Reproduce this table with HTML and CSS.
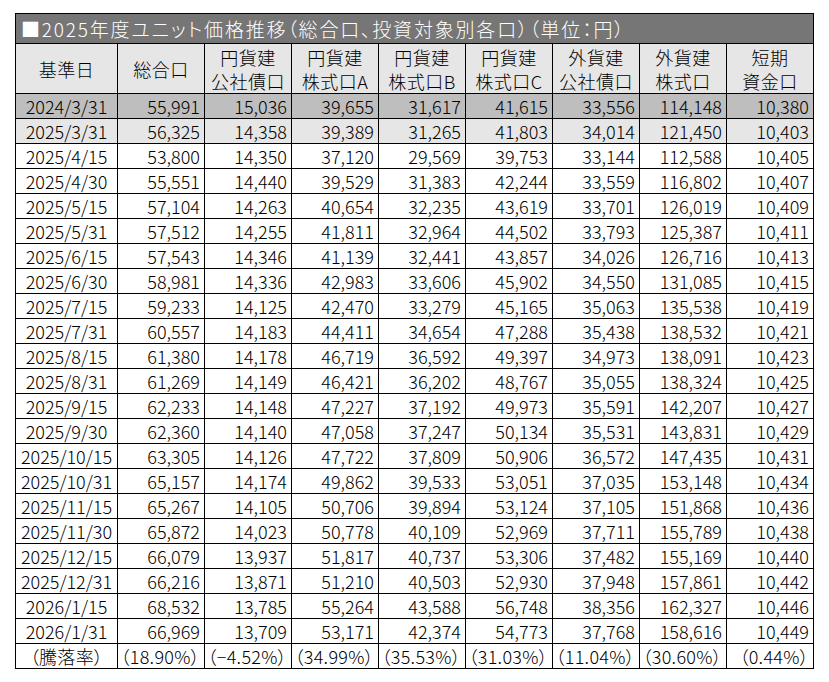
FILE: index.html
```html
<!DOCTYPE html>
<html lang="ja">
<head>
<meta charset="utf-8">
<title>2025年度ユニット価格推移</title>
<link rel="stylesheet" href="styles.css">
</head>
<body>
<div class="sheet">
  <div class="title">■2025年度ユニット価格推移（総合口、投資対象別各口）（単位：円）</div>
  <table class="grid">
    <colgroup>
      <col class="c-date">
      <col class="c-num"><col class="c-num"><col class="c-num"><col class="c-num">
      <col class="c-num"><col class="c-num"><col class="c-num"><col class="c-num">
    </colgroup>
    <thead>
      <tr class="head">
        <th>基準日</th>
        <th>総合口</th>
        <th>円貨建<br>公社債口</th>
        <th>円貨建<br>株式口A</th>
        <th>円貨建<br>株式口B</th>
        <th>円貨建<br>株式口C</th>
        <th>外貨建<br>公社債口</th>
        <th>外貨建<br>株式口</th>
        <th>短期<br>資金口</th>
      </tr>
    </thead>
    <tbody>
      <tr class="base-dark"><td>2024/3/31</td><td>55,991</td><td>15,036</td><td>39,655</td><td>31,617</td><td>41,615</td><td>33,556</td><td>114,148</td><td>10,380</td></tr>
      <tr class="base-light"><td>2025/3/31</td><td>56,325</td><td>14,358</td><td>39,389</td><td>31,265</td><td>41,803</td><td>34,014</td><td>121,450</td><td>10,403</td></tr>
      <tr><td>2025/4/15</td><td>53,800</td><td>14,350</td><td>37,120</td><td>29,569</td><td>39,753</td><td>33,144</td><td>112,588</td><td>10,405</td></tr>
      <tr><td>2025/4/30</td><td>55,551</td><td>14,440</td><td>39,529</td><td>31,383</td><td>42,244</td><td>33,559</td><td>116,802</td><td>10,407</td></tr>
      <tr><td>2025/5/15</td><td>57,104</td><td>14,263</td><td>40,654</td><td>32,235</td><td>43,619</td><td>33,701</td><td>126,019</td><td>10,409</td></tr>
      <tr><td>2025/5/31</td><td>57,512</td><td>14,255</td><td>41,811</td><td>32,964</td><td>44,502</td><td>33,793</td><td>125,387</td><td>10,411</td></tr>
      <tr><td>2025/6/15</td><td>57,543</td><td>14,346</td><td>41,139</td><td>32,441</td><td>43,857</td><td>34,026</td><td>126,716</td><td>10,413</td></tr>
      <tr><td>2025/6/30</td><td>58,981</td><td>14,336</td><td>42,983</td><td>33,606</td><td>45,902</td><td>34,550</td><td>131,085</td><td>10,415</td></tr>
      <tr><td>2025/7/15</td><td>59,233</td><td>14,125</td><td>42,470</td><td>33,279</td><td>45,165</td><td>35,063</td><td>135,538</td><td>10,419</td></tr>
      <tr><td>2025/7/31</td><td>60,557</td><td>14,183</td><td>44,411</td><td>34,654</td><td>47,288</td><td>35,438</td><td>138,532</td><td>10,421</td></tr>
      <tr><td>2025/8/15</td><td>61,380</td><td>14,178</td><td>46,719</td><td>36,592</td><td>49,397</td><td>34,973</td><td>138,091</td><td>10,423</td></tr>
      <tr><td>2025/8/31</td><td>61,269</td><td>14,149</td><td>46,421</td><td>36,202</td><td>48,767</td><td>35,055</td><td>138,324</td><td>10,425</td></tr>
      <tr><td>2025/9/15</td><td>62,233</td><td>14,148</td><td>47,227</td><td>37,192</td><td>49,973</td><td>35,591</td><td>142,207</td><td>10,427</td></tr>
      <tr><td>2025/9/30</td><td>62,360</td><td>14,140</td><td>47,058</td><td>37,247</td><td>50,134</td><td>35,531</td><td>143,831</td><td>10,429</td></tr>
      <tr><td>2025/10/15</td><td>63,305</td><td>14,126</td><td>47,722</td><td>37,809</td><td>50,906</td><td>36,572</td><td>147,435</td><td>10,431</td></tr>
      <tr><td>2025/10/31</td><td>65,157</td><td>14,174</td><td>49,862</td><td>39,533</td><td>53,051</td><td>37,035</td><td>153,148</td><td>10,434</td></tr>
      <tr><td>2025/11/15</td><td>65,267</td><td>14,105</td><td>50,706</td><td>39,894</td><td>53,124</td><td>37,105</td><td>151,868</td><td>10,436</td></tr>
      <tr><td>2025/11/30</td><td>65,872</td><td>14,023</td><td>50,778</td><td>40,109</td><td>52,969</td><td>37,711</td><td>155,789</td><td>10,438</td></tr>
      <tr><td>2025/12/15</td><td>66,079</td><td>13,937</td><td>51,817</td><td>40,737</td><td>53,306</td><td>37,482</td><td>155,169</td><td>10,440</td></tr>
      <tr><td>2025/12/31</td><td>66,216</td><td>13,871</td><td>51,210</td><td>40,503</td><td>52,930</td><td>37,948</td><td>157,861</td><td>10,442</td></tr>
      <tr><td>2026/1/15</td><td>68,532</td><td>13,785</td><td>55,264</td><td>43,588</td><td>56,748</td><td>38,356</td><td>162,327</td><td>10,446</td></tr>
      <tr><td>2026/1/31</td><td>66,969</td><td>13,709</td><td>53,171</td><td>42,374</td><td>54,773</td><td>37,768</td><td>158,616</td><td>10,449</td></tr>
      <tr class="rate"><td>（騰落率）</td><td>（18.90%）</td><td>（−4.52%）</td><td>（34.99%）</td><td>（35.53%）</td><td>（31.03%）</td><td>（11.04%）</td><td>（30.60%）</td><td>（0.44%）</td></tr>
    </tbody>
  </table>
</div>
</body>
</html>
```
FILE: styles.css
```css
html, body {
  margin: 0;
  padding: 0;
  background: #ffffff;
}

body {
  font-family: "Noto Sans CJK JP", "Liberation Sans", sans-serif;
  color: #000000;
}

.sheet {
  margin: 13px 0 0 15px;
  width: 799px;
}

.title {
  box-sizing: border-box;
  height: 30px;
  border: 1px solid #000;
  border-bottom: none;
  background: #767676;
  color: #ffffff;
  font-size: 19px;
  font-weight: 300;
  line-height: 29px;
  padding-left: 5px;
  white-space: nowrap;
  letter-spacing: 1.8px;
  font-feature-settings: "palt";
}

.grid {
  width: 799px;
  border-collapse: collapse;
  table-layout: fixed;
  font-size: 18px;
  font-weight: 300;
}

.c-date { width: 102px; }
.c-num { width: 87px; }

.grid th,
.grid td {
  border: 1px solid #000;
  padding: 0 4px 0 0;
  height: 24px;
  line-height: 22px;
  white-space: nowrap;
  overflow: hidden;
  text-align: right;
}

.grid td:first-child {
  text-align: center;
  padding: 0;
}

.grid th {
  font-weight: 300;
  height: 49px;
  line-height: 24px;
  text-align: center;
  padding: 0;
  background: #e6e6e6;
  letter-spacing: 0.5px;
}

.base-dark td { background: #bebebe; }
.base-light td { background: #e6e6e6; }

.rate td {
  font-feature-settings: "palt";
  letter-spacing: 0.3px;
}
```
